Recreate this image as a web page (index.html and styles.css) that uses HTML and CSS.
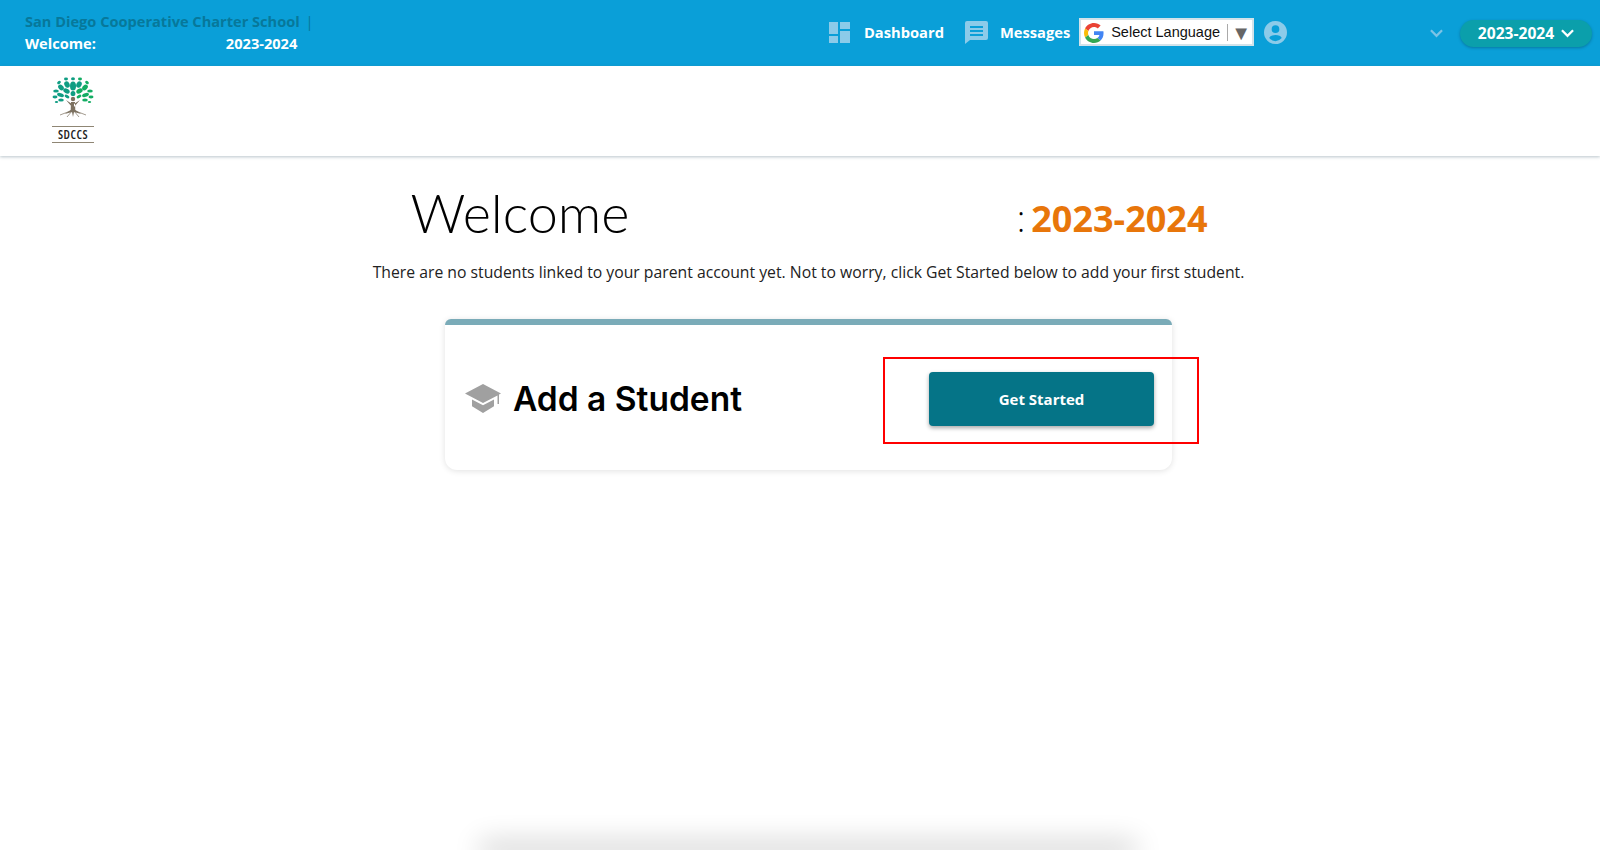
FILE: index.html
```html
<!DOCTYPE html>
<html lang="en">
  <head>
    <meta charset="UTF-8" />
    <title>Parent Portal</title>
    <link rel="stylesheet" href="styles.css">
  </head>
  <body>
    <div class="page">
      <!-- Top Bar -->
      <header class="topbar">
        <div class="school">
          <div class="school-name">San Diego Cooperative Charter School <span class="pipe">|</span></div>
          <div class="school-welcome"><span>Welcome:</span><span>2023-2024</span></div>
        </div>
        <nav class="topnav">
          <a class="nav-link" href="#">
            <svg class="nav-icon dash-icon" viewBox="0 0 21 21"><path d="M0 0h9v12H0zM0 14h9v7H0zM11 0h10v7H11zM11 9h10v12H11z"/></svg>
            Dashboard
          </a>
          <a class="nav-link" href="#">
            <svg class="nav-icon msg-icon" viewBox="0 0 23 23"><path fill-rule="evenodd" d="M2 0h19a2 2 0 0 1 2 2v15a2 2 0 0 1-2 2H5l-5 4V2a2 2 0 0 1 2-2zM5 5v2h13V5zM5 9v2h13V9zM5 13v2h13v-2z"/></svg>
            Messages
          </a>
          <div class="translate">
            <svg class="g-logo" viewBox="0 0 48 48">
              <path fill="#ea4335" d="M24 9.500c3.500 0 6.700 1.300 9.100 3.500l6.800-6.800C35.800 2.400 30.300 0 24 0 14.600 0 6.500 5.400 2.600 13.200l7.900 6.200C12.400 13.600 17.700 9.500 24 9.500z"/>
              <path fill="#4285f4" d="M46.900 24.500c0-1.600-.1-3.100-.4-4.500H24v9h12.900c-.6 3-2.200 5.400-4.700 7.100l7.600 5.900c4.400-4.100 7.100-10.200 7.100-17.500z"/>
              <path fill="#fbbc05" d="M10.500 28.600c-.5-1.400-.8-3-.8-4.600s.3-3.200.8-4.600l-7.900-6.200C.9 16.500 0 20.100 0 24s.9 7.500 2.600 10.800z"/>
              <path fill="#34a853" d="M24 48c6.500 0 11.900-2.100 15.800-5.900l-7.600-5.900c-2.100 1.400-4.900 2.300-8.200 2.300-6.300 0-11.600-4.100-13.500-9.900l-7.900 6.200C6.500 42.600 14.600 48 24 48z"/>
            </svg>
            <span class="translate-label">Select Language</span>
            <span class="translate-arrow">▼</span>
          </div>
          <svg class="user-icon" viewBox="0 0 24 24"><path fill-rule="evenodd" d="M12 0a12 12 0 1 1 0 24 12 12 0 0 1 0-24zm0 4.500a4 4 0 1 0 0 8 4 4 0 0 0 0-8zM12 14.500c-3 0-6 1.300-6.500 3.300A8.800 8.800 0 0 0 12 21a8.800 8.800 0 0 0 6.500-3.200c-.5-2-3.500-3.300-6.500-3.300z"/></svg>
        </nav>
        <div class="topbar-right">
          <svg class="chevron chevron-faded" viewBox="0 0 14 9"><path d="M1 1l6 6 6-6"/></svg>
          <div class="year-pill">
            2023-2024
            <svg class="chevron" viewBox="0 0 14 9"><path d="M1 1l6 6 6-6"/></svg>
          </div>
        </div>
      </header>

      <!-- Logo Bar -->
      <div class="logobar">
        <div class="logo">
          <svg class="tree" viewBox="0 0 42 42">
            <path fill="#7c7160" d="M19 25h4l.3 8 6 4-7.300-2-1 5-1-5-7.300 2 6-4zM14 23l6 4v3zM28 23l-6 4v3z"/>
            <path stroke="#7c7160" stroke-width=".7" fill="none" d="M21 33L8 38M21 33l13 5M20 34l-5 6M22 34l5 6"/>
            <circle cx="21" cy="22" r="2.200" fill="#7c7160"/>
            <g fill="#0f9d83">
              <ellipse cx="21" cy="9" rx="3" ry="4.500"/>
              <ellipse cx="15" cy="7.500" rx="2.600" ry="3.400" transform="rotate(-25 15 7.500)"/>
              <ellipse cx="27" cy="7.500" rx="2.600" ry="3.400" transform="rotate(25 27 7.500)"/>
              <ellipse cx="9" cy="10.500" rx="2.300" ry="3.300" transform="rotate(-45 9 10.500)"/>
              <ellipse cx="14.500" cy="14" rx="3.400" ry="2.300" transform="rotate(30 14.500 14)"/>
              <ellipse cx="21" cy="16.500" rx="2.400" ry="2.600"/>
              <ellipse cx="4" cy="14" rx="2.800" ry="1.600"/>
              <ellipse cx="8.500" cy="18" rx="3.500" ry="1.900" transform="rotate(15 8.500 18)"/>
              <ellipse cx="15" cy="19.500" rx="2.600" ry="1.500" transform="rotate(30 15 19.500)"/>
              <ellipse cx="14" cy="2" rx="2" ry="1.400"/>
              <ellipse cx="21" cy="1.800" rx="2" ry="1.500"/>
              <ellipse cx="7" cy="5.500" rx="2" ry="1.400" transform="rotate(-35 7 5.500)"/>
              <ellipse cx="3" cy="20" rx="2.500" ry="1.400"/>
              <ellipse cx="9" cy="23" rx="2.800" ry="1.500"/>
              <ellipse cx="4.500" cy="25" rx="1.700" ry="1.100"/>
            </g>
            <g fill="#13ad63">
              <ellipse cx="27.500" cy="14" rx="3.400" ry="2.300" transform="rotate(-30 27.500 14)"/>
              <ellipse cx="33" cy="10.500" rx="2.300" ry="3.300" transform="rotate(45 33 10.500)"/>
              <ellipse cx="38" cy="14" rx="2.800" ry="1.600"/>
              <ellipse cx="33.500" cy="18" rx="3.500" ry="1.900" transform="rotate(-15 33.500 18)"/>
              <ellipse cx="27" cy="19.500" rx="2.600" ry="1.500" transform="rotate(-30 27 19.500)"/>
              <ellipse cx="28" cy="2" rx="2" ry="1.400"/>
              <ellipse cx="35" cy="5.500" rx="2" ry="1.400" transform="rotate(35 35 5.500)"/>
              <ellipse cx="39" cy="20" rx="2.500" ry="1.400"/>
              <ellipse cx="33" cy="23" rx="2.800" ry="1.500"/>
              <ellipse cx="37.500" cy="25" rx="1.700" ry="1.100"/>
            </g>
          </svg>
          <div class="logo-text">SDCCS</div>
        </div>
      </div>

      <main class="content">
        <div class="welcome-row">
          <h1>Welcome</h1>
          <span class="colon">:</span>
          <span class="welcome-year">2023-2024</span>
        </div>
        <p class="intro">There are no students linked to your parent account yet. Not to worry, click Get Started below to add your first student.</p>

        <section class="card">
          <div class="card-title">
            <svg class="cap-icon" viewBox="0 0 36 29"><path d="M18 0l18 9.500-2 1.100V20h-1.500v-8.600L18 19 0 9.500zM7 15.500l11 5.800 11-5.800v6.700L18 29 7 22.200z"/></svg>
            <h2>Add a Student</h2>
          </div>
          <button class="start-btn">Get Started</button>
          <div class="highlight"></div>
        </section>
      </main>

      <div class="footer-shadow"></div>
    </div>
  </body>
</html>
```

FILE: styles.css
```css
/* Global Styles */
:root {
  --header-blue: #0a9fd8;
  --teal: #057487;
  --orange: #e8760a;
}

* {
  margin: 0;
  padding: 0;
  box-sizing: border-box;
}

html,
body {
  height: 100%;
  overflow: hidden;
}

body {
  font-family: "Open Sans", sans-serif;
  background: #fff;
  color: #222;
}

.page {
  height: 850px;
  display: flex;
  flex-direction: column;
}

/* Top Bar */
.topbar {
  height: 66px;
  flex-shrink: 0;
  display: flex;
  align-items: center;
  background-color: var(--header-blue);
  padding: 0 8px 0 25px;
}

.school {
  width: 804px;
  margin-bottom: 2px;
  font-size: 14.6px;
  font-weight: 700;
  line-height: 22px;
}

.school-name {
  color: #07789a;
}

.pipe {
  margin-left: 2px;
  font-weight: 400;
}

.school-welcome {
  display: flex;
  gap: 130px;
  color: #fff;
}

.topnav {
  display: flex;
  align-items: center;
  margin-bottom: 2px;
}

.nav-link {
  display: flex;
  align-items: center;
  color: #fff;
  font-size: 14.7px;
  font-weight: 700;
  text-decoration: none;
}

.nav-icon {
  fill: #8ccbe9;
}

.dash-icon {
  width: 21px;
  height: 21px;
  margin-right: 14px;
}

.msg-icon {
  width: 23px;
  height: 23px;
  margin: 0 12px 0 21px;
}

.translate {
  width: 175px;
  height: 28px;
  margin-left: 9px;
  display: flex;
  align-items: center;
  background: #fff;
  border: 2px solid #d3e3ea;
  padding: 1px 0 0 3px;
  font-family: "Liberation Sans", sans-serif;
  font-size: 14.5px;
  color: #111;
}

.g-logo {
  width: 20px;
  height: 20px;
  margin-right: 7px;
}

.translate-label {
  width: 117px;
  padding-right: 6px;
  border-right: 1px solid #aaa;
  line-height: 17px;
  white-space: nowrap;
}

.translate-arrow {
  margin-left: 3px;
  font-size: 20px;
  line-height: 1;
  color: #666;
}

.user-icon {
  width: 23px;
  height: 23px;
  margin-left: 10px;
  fill: #8ccbe9;
}

.topbar-right {
  margin-left: auto;
  display: flex;
  align-items: center;
  gap: 17px;
}

.chevron {
  width: 13px;
  height: 9px;
  fill: none;
  stroke: #fff;
  stroke-width: 2.4;
}

.chevron-faded {
  stroke: #7cc3e6;
}

.year-pill {
  width: 132px;
  height: 27px;
  display: flex;
  align-items: center;
  justify-content: center;
  gap: 7px;
  border-radius: 14px;
  background-color: #0b9fab;
  box-shadow: 0 1px 3px rgba(0, 0, 0, 0.25);
  color: #fff;
  font-size: 15.6px;
  font-weight: 700;
}

/* Logo Bar */
.logobar {
  height: 90px;
  flex-shrink: 0;
  padding: 11px 0 0 52px;
  background: #fff;
  box-shadow: 0 1px 3px rgba(80, 110, 125, 0.4);
}

.logo {
  width: 42px;
}

.tree {
  display: block;
  width: 42px;
  height: 42px;
}

.logo-text {
  margin-top: 7px;
  border-top: 1px solid #8f8674;
  border-bottom: 1px solid #8f8674;
  font-size: 12px;
  font-stretch: 75%;
  font-weight: 600;
  line-height: 15px;
  letter-spacing: 0.5px;
  text-align: center;
  color: #222;
}

/* Main Content */
.content {
  flex: 1;
  display: flex;
  flex-direction: column;
  align-items: center;
  padding-left: 17px;
}

.welcome-row {
  width: 798px;
  height: 70px;
  margin-top: 22px;
  display: flex;
  padding-left: 1px;
  color: #000;
}

h1 {
  font-family: Lato, sans-serif;
  font-size: 54px;
  font-weight: 300;
  line-height: 70px;
}

.colon {
  margin: 6px 0 0 auto;
  font-size: 36px;
  font-weight: 300;
  line-height: 70px;
}

.welcome-year {
  margin: 6px 0 0 6px;
  font-size: 36px;
  font-weight: 700;
  line-height: 70px;
  color: var(--orange);
}

.intro {
  margin-top: 13px;
  font-size: 15.75px;
  line-height: 22px;
}

.card {
  position: relative;
  width: 727px;
  height: 151px;
  margin-top: 36px;
  display: flex;
  align-items: center;
  justify-content: space-between;
  padding: 2px 18px 0 20px;
  background: #fff;
  border-top: 6px solid #7aabb8;
  border-radius: 6px 6px 12px 12px;
  box-shadow: 0 1px 6px rgba(0, 0, 0, 0.12);
}

.card-title {
  display: flex;
  align-items: center;
  gap: 12px;
}

.cap-icon {
  width: 36px;
  height: 29px;
  fill: #a0a0a0;
}

h2 {
  font-family: Inter, sans-serif;
  font-size: 33.5px;
  font-weight: 600;
  color: #000;
}

.start-btn {
  width: 225px;
  height: 54px;
  border: none;
  border-radius: 4px;
  background-color: var(--teal);
  box-shadow: 0 2px 4px rgba(0, 0, 0, 0.35);
  color: #fff;
  font-family: inherit;
  font-size: 15px;
  font-weight: 700;
}

/* Red marker drawn over the card */
.highlight {
  position: absolute;
  left: 438px;
  top: 32px;
  width: 316px;
  height: 87px;
  border: 2px solid #f00;
  pointer-events: none;
}

.footer-shadow {
  flex-shrink: 0;
  align-self: center;
  width: 640px;
  height: 0;
  margin-left: 16px;
  box-shadow: 0 0 28px 8px rgba(0, 0, 0, 0.2);
}
```
